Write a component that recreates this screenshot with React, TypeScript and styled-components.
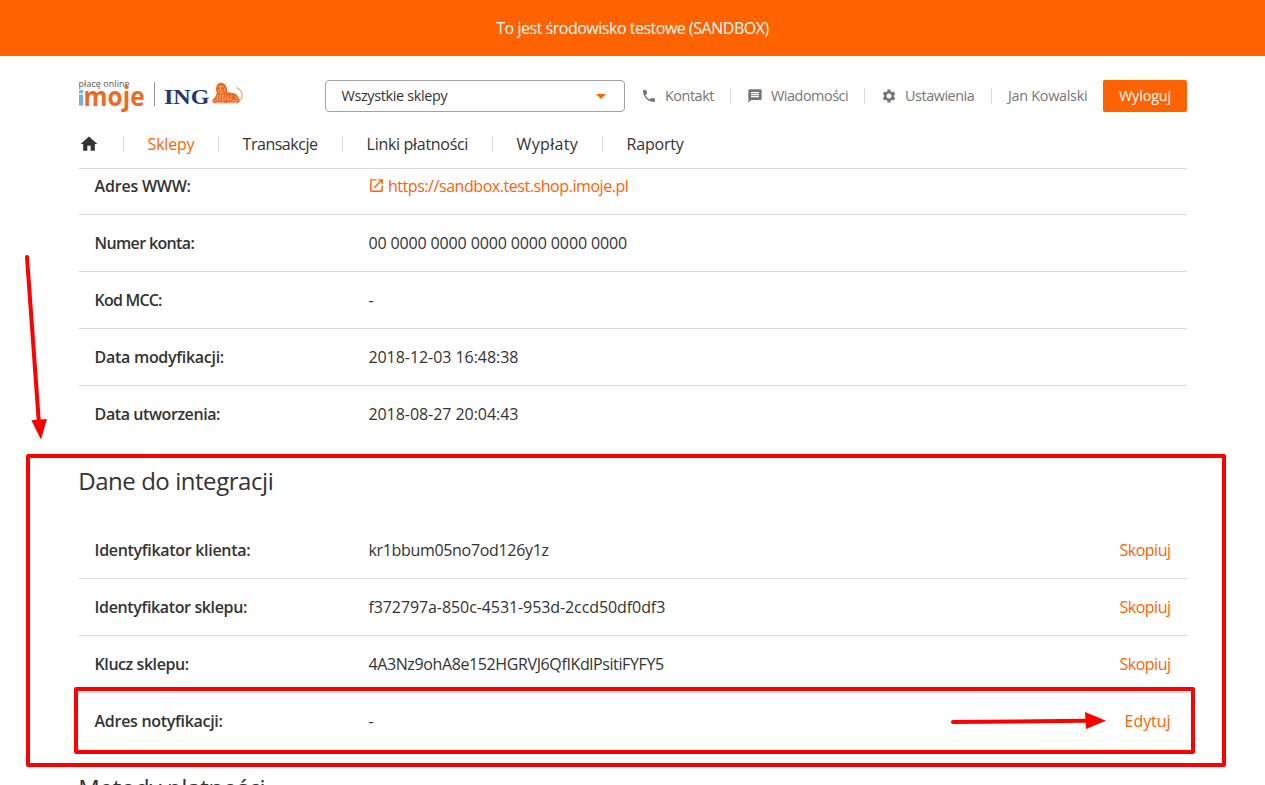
import React from 'react';
import styled, { createGlobalStyle } from 'styled-components';

const orange = '#ff6200';
const line = '#d9d9d9';
const ink = '#333333';
const muted = '#767676';

const GlobalStyle = createGlobalStyle`
  *, *::before, *::after { box-sizing: border-box; }
  body {
    margin: 0;
    background: #fff;
    color: ${ink};
    font-family: "Open Sans", "Noto Sans", sans-serif;
    font-size: 16px;
  }
`;

const Page = styled.div`
  position: relative;
  display: flex;
  flex-direction: column;
  height: 785px;
  overflow: hidden;
`;

const Banner = styled.div`
  flex: none;
  display: flex;
  align-items: center;
  justify-content: center;
  height: 56px;
  background: ${orange};
  color: #fff;
`;

const Container = styled.div`
  display: flex;
  flex-direction: column;
  flex: 1;
  min-height: 0;
  width: 1108px;
  margin-left: 79px;
`;

const Text = styled.span<{ $spacing?: number }>`
  white-space: nowrap;
  letter-spacing: ${p => p.$spacing ?? 0}px;
`;

/* ---------- header ---------- */

const Header = styled.header`
  flex: none;
  display: flex;
  align-items: center;
  height: 32px;
  margin-top: 24px;
  font-size: 14.4px;
`;

const HeaderText = styled(Text)`
  padding-bottom: 2px;
`;

const LogoBox = styled.svg`
  flex: none;
  display: block;
  width: 170px;
  height: 40px;
  margin-right: 76px;
`;

const Select = styled.div`
  flex: none;
  display: flex;
  align-items: center;
  justify-content: space-between;
  width: 300px;
  height: 32px;
  padding: 0 11px 0 15.5px;
  border: 1px solid #a3a3a3;
  border-radius: 4px;
`;

const Icon = styled.svg<{ $size: number }>`
  flex: none;
  display: block;
  width: ${p => p.$size}px;
  height: ${p => p.$size}px;
  fill: currentColor;
`;

const Caret = styled.span`
  display: flex;
  color: ${orange};
`;

const UserItem = styled.div<{ $width: number; $first?: boolean }>`
  flex: none;
  display: flex;
  align-items: center;
  gap: 8px;
  width: ${p => p.$width}px;
  height: 16px;
  padding-left: 16px;
  color: ${muted};
  border-left: ${p => (p.$first ? 0 : 1)}px solid ${line};
`;

const LogoutButton = styled.button`
  flex: none;
  display: flex;
  align-items: center;
  justify-content: center;
  width: 84px;
  height: 32px;
  padding: 0;
  border: 0;
  border-radius: 2px;
  background: ${orange};
  color: #fff;
  font: inherit;
`;

/* ---------- navigation ---------- */

const Nav = styled.nav`
  flex: none;
  display: flex;
  align-items: center;
  height: 57px;
  padding-bottom: 8px;
  padding-top: 16px;
  border-bottom: 1px solid ${line};
`;

const NavItem = styled.div<{ $width: number; $active?: boolean }>`
  flex: none;
  display: flex;
  align-items: center;
  width: ${p => p.$width}px;
  height: 16px;
  padding-left: 23.6px;
  border-left: 1px solid ${line};
  color: ${p => (p.$active ? orange : ink)};
`;

const HomeItem = styled.div`
  flex: none;
  width: 44px;
  margin-left: -0.5px;
  margin-right: 0.5px;
`;

/* ---------- content ---------- */

const Content = styled.main`
  flex: 1;
  min-height: 0;
  overflow: hidden;
`;

const Rows = styled.div<{ $scrolled?: boolean }>`
  margin-top: ${p => (p.$scrolled ? -11 : 0)}px;
`;

const Row = styled.div`
  display: flex;
  align-items: center;
  height: 57px;
  padding: 0 16.5px 1px 15.6px;
  border-bottom: 1px solid ${line};
  &:last-child { border-bottom-color: transparent; }
`;

const Label = styled.div`
  flex: none;
  width: 273.8px;
  font-weight: 600;
`;

const Value = styled.div`
  flex: 1;
  display: flex;
  align-items: center;
`;

const Link = styled.a`
  display: flex;
  align-items: center;
  gap: 3px;
  color: ${orange};
`;

const ShopLink = styled(Link)`
  margin-left: -0.5px;
`;

const Heading = styled.h2`
  height: 79px;
  margin: 0 0 0 -0.8px;
  padding-top: 22px;
  font-size: 24px;
  font-weight: 400;
  line-height: 32px;
`;

/* ---------- annotations ---------- */

const Highlight = styled.div<{ $x: number; $y: number; $w: number; $h: number }>`
  position: absolute;
  left: ${p => p.$x}px;
  top: ${p => p.$y}px;
  width: ${p => p.$w}px;
  height: ${p => p.$h}px;
  border: 4px solid #ff0000;
  border-radius: 2px;
`;

const Arrows = styled.svg`
  position: absolute;
  inset: 0;
  width: 1265px;
  height: 785px;
  pointer-events: none;
`;

const paths = {
  home: 'M10 20v-6h4v6h5v-8h3L12 3 2 12h3v8z',
  phone:
    'M6.62 10.79c1.44 2.83 3.76 5.14 6.59 6.59l2.2-2.2c.27-.27.67-.36 1.02-.24 1.12.37 2.33.57 3.57.57.55 0 1 .45 1 1V20c0 .55-.45 1-1 1-9.39 0-17-7.61-17-17 0-.55.45-1 1-1h3.5c.55 0 1 .45 1 1 0 1.25.2 2.45.57 3.57.11.35.03.74-.25 1.02l-2.2 2.2z',
  message:
    'M20 2H4c-1.1 0-1.99.9-1.99 2L2 22l4-4h14c1.1 0 2-.9 2-2V4c0-1.1-.9-2-2-2zm-2 12H6v-2h12v2zm0-3H6V9h12v2zm0-3H6V6h12v2z',
  settings:
    'M19.14 12.94c.04-.3.06-.61.06-.94 0-.32-.02-.64-.07-.94l2.03-1.58c.18-.14.23-.41.12-.61l-1.92-3.32c-.12-.22-.37-.29-.59-.22l-2.39.96c-.5-.38-1.03-.7-1.62-.94l-.36-2.54c-.04-.24-.24-.41-.48-.41h-3.84c-.24 0-.43.17-.47.41l-.36 2.54c-.59.24-1.13.57-1.62.94l-2.39-.96c-.22-.08-.47 0-.59.22L2.74 8.87c-.12.21-.08.47.12.61l2.03 1.58c-.05.3-.09.63-.09.94s.02.64.07.94l-2.03 1.58c-.18.14-.23.41-.12.61l1.92 3.32c.12.22.37.29.59.22l2.39-.96c.5.38 1.03.7 1.62.94l.36 2.54c.05.24.24.41.48.41h3.84c.24 0 .44-.17.47-.41l.36-2.54c.59-.24 1.13-.56 1.62-.94l2.39.96c.22.08.47 0 .59-.22l1.92-3.32c.12-.22.07-.47-.12-.61l-2.01-1.58zM12 15.6c-1.98 0-3.6-1.62-3.6-3.6s1.62-3.6 3.6-3.6 3.6 1.62 3.6 3.6-1.62 3.6-3.6 3.6z',
  open:
    'M19 19H5V5h7V3H5c-1.11 0-2 .9-2 2v14c0 1.1.89 2 2 2h14c1.1 0 2-.9 2-2v-7h-2v7zM14 3v2h3.59l-9.83 9.83 1.41 1.41L19 6.41V10h2V3h-7z',
  caret: 'M7 10l5 5 5-5z',
};

const Glyph = ({ name, size }: { name: keyof typeof paths; size: number }) => (
  <Icon $size={size} viewBox="0 0 24 24">
    <path d={paths[name]} />
  </Icon>
);

const Logo = () => (
  <LogoBox viewBox="0 0 170 40">
    <text x="-0.5" y="10.6" fontSize="8.8" textLength="51" fill="#555">płacę online</text>
    <rect x="0" y="14.2" width="4" height="3" fill="#6cb4e4" />
    <rect x="0" y="18.6" width="4" height="11" fill="#6cb4e4" />
    <text x="4.6" y="29.6" fontSize="26.5" fontWeight="700" textLength="61" lengthAdjust="spacingAndGlyphs" fill="#ee6a21">moje</text>
    <rect x="75" y="6" width="1" height="24" fill="#999" />
    <text x="85" y="27.6" fontFamily="'Liberation Serif', serif" fontSize="22" fontWeight="700" textLength="45.5" lengthAdjust="spacingAndGlyphs" fill="#26366f">ING</text>
    <g transform="translate(128.7 2) scale(.3333)">
      <path
        d="M40 14c-8 0-14 5-14 13-2 5-2 10 1 15 0 6-2 11-6 17l-7 8c0 6 3 9 9 9h65c6-2 10-6 8-11-1-4-4-6-6-11-4-8-11-10-20-10l-13-2c2-6 2-12-2-17-2-7-7-11-15-11z"
        fill="#ee6a21"
      />
      <path d="M92 72c8-5 12-13 11-24-2-10-8-16-17-19" fill="none" stroke="#ee8a4a" strokeWidth="3" strokeLinecap="round" />
      <g fill="none" stroke="#fff" strokeOpacity=".6" strokeWidth="2.2" strokeLinecap="round">
        <path d="M33 26c3-3 5-1 6 2 1-3 4-5 8-2M39 29l-1 8 4 1M35 43c3 2 7 2 10-1M30 35l3 5M52 32l-3 9" />
        <path d="M30 52l-2 16M38 50l-2 19M46 49l-1 20M54 52l-2 14M22 66l-3 5M61 56c-3 5-2 9 4 11M72 54c-6 4-4 10 2 14l14 1M84 56l6 8M26 74h22M58 74h30" />
      </g>
    </g>
  </LogoBox>
);

const details: [string, number, string, number][] = [
  ['Numer konta:', -0.65, '00 0000 0000 0000 0000 0000 0000', -0.13],
  ['Kod MCC:', -0.8, '-', 0],
  ['Data modyfikacji:', -0.29, '2018-12-03 16:48:38', -0.05],
  ['Data utworzenia:', -0.42, '2018-08-27 20:04:43', -0.05],
];

const integration: [string, number, string, number, string, number][] = [
  ['Identyfikator klienta:', -0.31, 'kr1bbum05no7od126y1z', -0.32, 'Skopiuj', -0.5],
  ['Identyfikator sklepu:', -0.37, 'f372797a-850c-4531-953d-2ccd50df0df3', -0.085, 'Skopiuj', -0.5],
  ['Klucz sklepu:', -0.44, '4A3Nz9ohA8e152HGRVJ6QfIKdlPsitiFYFY5', -0.38, 'Skopiuj', -0.5],
  ['Adres notyfikacji:', -0.3, '-', 0, 'Edytuj', -0.06],
];

export default function App() {
  return (
    <Page>
      <GlobalStyle />
      <Banner><Text $spacing={-0.48}>To jest środowisko testowe (SANDBOX)</Text></Banner>
      <Container>
        <Header>
          <Logo />
          <Select>
            <HeaderText $spacing={-0.34}>Wszystkie sklepy</HeaderText>
            <Caret><Glyph name="caret" size={24} /></Caret>
          </Select>
          <UserItem $width={105} $first>
            <Glyph name="phone" size={16} /><HeaderText $spacing={-0.45}>Kontakt</HeaderText>
          </UserItem>
          <UserItem $width={134}>
            <Glyph name="message" size={16} /><HeaderText $spacing={-0.46}>Wiadomości</HeaderText>
          </UserItem>
          <UserItem $width={127}>
            <Glyph name="settings" size={16} /><HeaderText $spacing={-0.45}>Ustawienia</HeaderText>
          </UserItem>
          <UserItem $width={112}>
            <HeaderText $spacing={-0.29}>Jan Kowalski</HeaderText>
          </UserItem>
          <LogoutButton><HeaderText $spacing={-0.15}>Wyloguj</HeaderText></LogoutButton>
        </Header>
        <Nav>
          <HomeItem><Glyph name="home" size={20} /></HomeItem>
          <NavItem $width={95} $active><Text $spacing={-0.2}>Sklepy</Text></NavItem>
          <NavItem $width={124}><Text $spacing={-0.48}>Transakcje</Text></NavItem>
          <NavItem $width={150}><Text $spacing={-0.3}>Linki płatności</Text></NavItem>
          <NavItem $width={110}><Text $spacing={0.34}>Wypłaty</Text></NavItem>
          <NavItem $width={110}><Text $spacing={-0.2}>Raporty</Text></NavItem>
        </Nav>
        <Content>
          <Rows $scrolled>
            <Row>
              <Label><Text $spacing={-0.22}>Adres WWW:</Text></Label>
              <Value>
                <ShopLink>
                  <Glyph name="open" size={17} />
                  <Text $spacing={-0.44}>https://sandbox.test.shop.imoje.pl</Text>
                </ShopLink>
              </Value>
            </Row>
            {details.map(([label, labelSpacing, value, valueSpacing]) => (
              <Row key={label}>
                <Label><Text $spacing={labelSpacing}>{label}</Text></Label>
                <Value><Text $spacing={valueSpacing}>{value}</Text></Value>
              </Row>
            ))}
          </Rows>
          <Heading><Text $spacing={-0.45}>Dane do integracji</Text></Heading>
          <Rows>
            {integration.map(([label, labelSpacing, value, valueSpacing, action, actionSpacing]) => (
              <Row key={label}>
                <Label><Text $spacing={labelSpacing}>{label}</Text></Label>
                <Value><Text $spacing={valueSpacing}>{value}</Text></Value>
                <Link><Text $spacing={actionSpacing}>{action}</Text></Link>
              </Row>
            ))}
          </Rows>
          <Heading><Text $spacing={-0.3}>Metody płatności</Text></Heading>
        </Content>
      </Container>
      <Highlight $x={26} $y={454} $w={1200} $h={313} />
      <Highlight $x={74} $y={687} $w={1121} $h={67} />
      <Arrows viewBox="0 0 1265 785" fill="#ff0000" stroke="#ff0000">
        <path d="M27 257L38.7 420" strokeWidth="4" strokeLinecap="round" />
        <path d="M31.3 420.3L47 419L41 439.5z" stroke="none" />
        <path d="M953 722L1086 720.8" strokeWidth="4" strokeLinecap="round" />
        <path d="M1085 712L1086 729L1106 720.7z" stroke="none" />
      </Arrows>
    </Page>
  );
}
